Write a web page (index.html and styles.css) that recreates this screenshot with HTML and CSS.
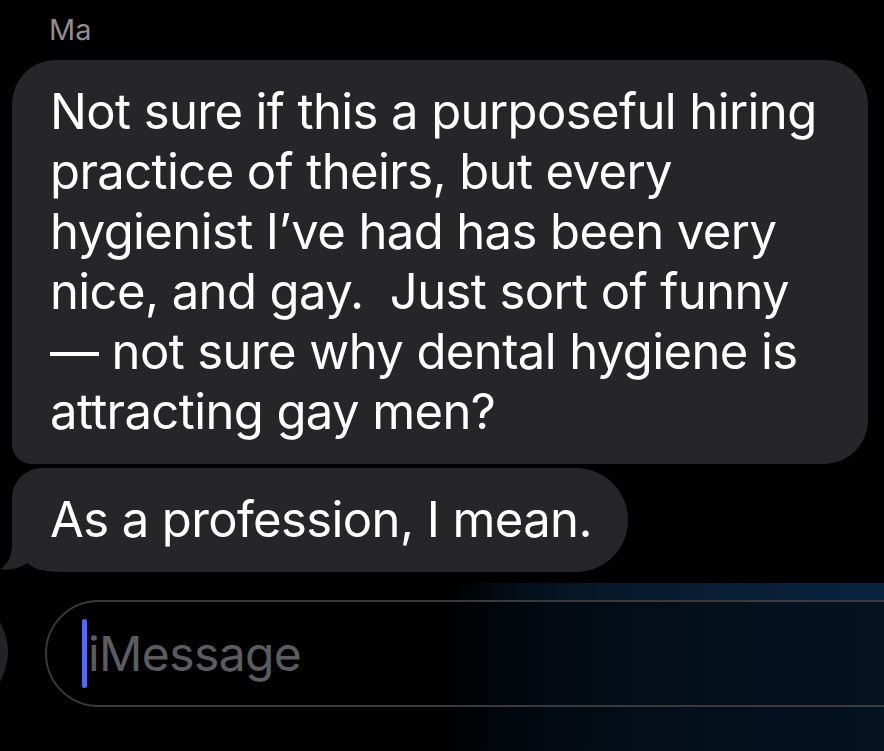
FILE: index.html
```html
<!DOCTYPE html>
<html lang="en">
<head>
<meta charset="utf-8">
<title>Messages</title>
<link rel="stylesheet" href="styles.css">
</head>
<body>
<div class="screen">
  <div class="thread">
    <div class="sender">Ma</div>
    <div class="bubble bubble-first">Not sure if this a purposeful hiring<br>practice of theirs, but every<br>hygienist I’ve had has been very<br>nice, and gay.&nbsp; Just sort of funny<br>— not sure why dental hygiene is<br>attracting gay men?</div>
    <div class="bubble bubble-last">As a profession, I mean.<svg class="tail" viewBox="0 515 60 57" width="60" height="57" aria-hidden="true"><path d="M12 512 L12 545 C12 558 6 566 0 569 C10 571 20 568 27 563 C33 568 42 572 60 572 L60 512 Z" fill="#262629"/></svg></div>
  </div>
  <div class="composer">
    <div class="apps-button"></div>
    <div class="field">
      <span class="caret"></span><span class="placeholder">iMessage</span>
    </div>
  </div>
</div>
</body>
</html>
```
FILE: styles.css
```css
html, body {
  margin: 0;
  padding: 0;
  background: #000;
}
body {
  font-family: Inter, "Noto Sans", "Liberation Sans", sans-serif;
  color: #fff;
  width: 884px;
  height: 751px;
  overflow: hidden;
}
.screen {
  display: flex;
  flex-direction: column;
  height: 751px;
}
.thread {
  display: flex;
  flex-direction: column;
  align-items: flex-start;
  padding: 0 12px;
}
.sender {
  font-size: 29px;
  line-height: 60px;
  height: 60px;
  color: #8e8e93;
  padding-left: 37px;
  box-sizing: border-box;
}
.bubble {
  background: #262629;
  font-size: 49px;
  letter-spacing: -0.6px;
  line-height: 60px;
  padding: 22px 40px 22px 38px;
  box-sizing: border-box;
  white-space: nowrap;
}
.bubble-first {
  width: 856px;
  border-radius: 44px 44px 44px 20px;
}
.bubble-last {
  position: relative;
  z-index: 0;
  margin-top: 4px;
  padding-right: 36px;
  border-radius: 30px 52px 52px 52px;
}
.tail {
  position: absolute;
  z-index: -1;
  left: -12px;
  bottom: 0;
  display: block;
}
.composer {
  position: relative;
  margin-top: 11px;
  flex: 1;
  padding-top: 17px;
  overflow: hidden;
  background: linear-gradient(to right, #000 0%, #000 50%, #030a12 62%, #04101c 80%, #05121f 100%);
}
.composer::before {
  content: "";
  position: absolute;
  left: 0;
  right: 0;
  top: 0;
  height: 17px;
  background: linear-gradient(to right, rgba(0,0,0,0) 52%, #071a2c 70%, #0a2440 100%);
}
.apps-button {
  position: absolute;
  left: -108px;
  top: 11px;
  width: 116px;
  height: 116px;
  border-radius: 50%;
  background: #232325;
}
.field {
  position: relative;
  margin-left: 45px;
  width: 900px;
  height: 107px;
  box-sizing: border-box;
  border: 2px solid #3a3a3c;
  border-radius: 54px;
  display: flex;
  align-items: center;
  padding-left: 35px;
  gap: 1px;
}
.caret {
  width: 5px;
  height: 69px;
  border-radius: 3px;
  background: #4f6cf2;
  flex: none;
}
.placeholder {
  font-size: 48px;
  letter-spacing: -0.6px;
  line-height: 60px;
  color: #5c5c60;
}
```
